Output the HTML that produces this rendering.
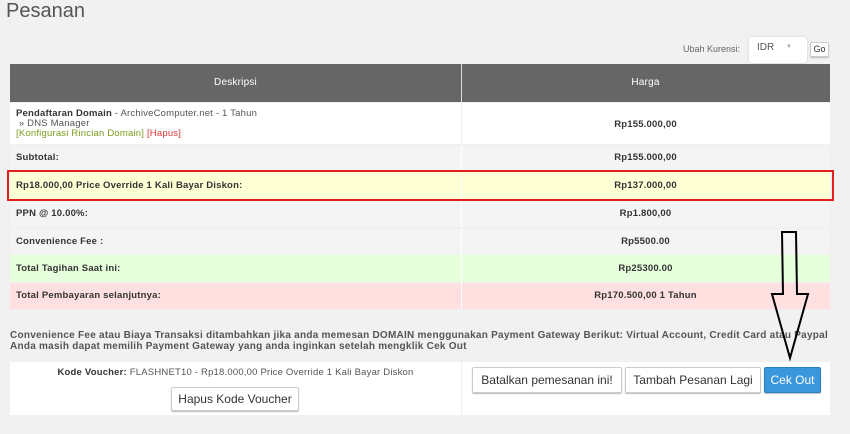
<!DOCTYPE html>
<html><head><style>
body{margin:0;width:850px;height:434px;background:#f1f1f1;font-family:"Liberation Sans",sans-serif;position:relative;overflow:hidden;color:#333}
.a{position:absolute}
.r{position:absolute;left:10px;width:820px;font-size:9.5px;font-weight:bold;color:#333;letter-spacing:0.2px}
.r .l{position:absolute;left:6px}
.r .p{position:absolute;left:461px;width:369px;text-align:center;margin-left:-10px}
.sep{position:absolute;left:451px;top:0;bottom:0;width:1px;background:#fff}
.btn{position:absolute;background:#fff;border:1px solid #ccc;border-radius:2px;font-size:12px;color:#333;text-align:center;box-shadow:0 1px 1px #bbb}
</style></head><body>
<div class="a" style="left:6px;top:0;font-size:20px;color:#555">Pesanan</div>
<div class="a" style="left:683px;top:44px;font-size:9px;color:#666">Ubah Kurensi:</div>
<div class="a" style="left:749px;top:37px;width:58px;height:26px;background:#fff;border-radius:3px;box-shadow:0 0 2px #ccc;font-size:10px;color:#555"><span style="position:absolute;left:8px;top:5px">IDR</span><span style="position:absolute;left:37px;top:7px;font-size:6px;color:#aaa">▼</span></div>
<div class="btn" style="left:810px;top:42px;width:17px;height:13px;font-size:9px;line-height:13px">Go</div>
<div class="r" style="top:64px;height:38px;background:#666;color:#fff;font-weight:normal;font-size:10px;line-height:38px"><div class="sep" style="background:#ddd"></div><span style="position:absolute;left:0;width:451px;text-align:center">Deskripsi</span><span class="p">Harga</span></div>
<div class="r" style="top:103px;height:41px;background:#fff;font-weight:normal;line-height:10px"><div class="sep" style="background:#eee"></div><div class="l" style="top:6px;color:#555"><b style="color:#333">Pendaftaran Domain</b> - ArchiveComputer.net - 1 Tahun<br>&nbsp;» DNS Manager<br><span style="color:#7a9a1a">[Konfigurasi Rincian Domain]</span> <span style="color:#d33">[Hapus]</span></div><span class="p" style="top:17px;font-weight:bold">Rp155.000,00</span></div>
<div class="r" style="top:146px;height:24px;background:#f4f4f4;line-height:24px"><div class="sep"></div><span class="l">Subtotal:</span><span class="p">Rp155.000,00</span></div>
<div class="r" style="top:172px;height:27px;background:#ffffd6;line-height:27px"><div class="sep"></div><span class="l">Rp18.000,00 Price Override 1 Kali Bayar Diskon:</span><span class="p">Rp137.000,00</span></div>
<div class="a" style="left:7px;top:170px;width:823px;height:27px;border:2px solid #e02020"></div>
<div class="r" style="top:201px;height:26px;background:#f4f4f4;line-height:26px"><div class="sep"></div><span class="l">PPN @ 10.00%:</span><span class="p">Rp1.800,00</span></div>
<div class="r" style="top:229px;height:25px;background:#f4f4f4;line-height:25px"><div class="sep"></div><span class="l">Convenience Fee :</span><span class="p">Rp5500.00</span></div>
<div class="r" style="top:255px;height:27px;background:#e6ffdc;line-height:27px"><div class="sep"></div><span class="l">Total Tagihan Saat ini:</span><span class="p">Rp25300.00</span></div>
<div class="r" style="top:283px;height:26px;background:#ffe0e0;line-height:26px"><div class="sep"></div><span class="l">Total Pembayaran selanjutnya:</span><span class="p">Rp170.500,00 1 Tahun</span></div>
<div class="a" style="left:10px;top:330px;font-size:10px;font-weight:bold;color:#555;line-height:11px;white-space:nowrap;letter-spacing:0.25px">Convenience Fee atau Biaya Transaksi ditambahkan jika anda memesan DOMAIN menggunakan Payment Gateway Berikut: Virtual Account, Credit Card atau Paypal<br>Anda masih dapat memilih Payment Gateway yang anda inginkan setelah mengklik Cek Out</div>
<div class="r" style="top:362px;height:53px;background:#fff;font-weight:normal"><div class="sep" style="background:#eee"></div><div style="position:absolute;left:0;width:451px;top:5px;text-align:center;color:#555"><b style="color:#333">Kode Voucher:</b> FLASHNET10 - Rp18.000,00 Price Override 1 Kali Bayar Diskon</div></div>
<div class="btn" style="left:171px;top:387px;width:126px;height:22px;line-height:22px">Hapus Kode Voucher</div>
<div class="btn" style="left:472px;top:367px;width:148px;height:24px;line-height:24px">Batalkan pemesanan ini!</div>
<div class="btn" style="left:625px;top:367px;width:134px;height:24px;line-height:24px">Tambah Pesanan Lagi</div>
<div class="btn" style="left:764px;top:367px;width:55px;height:24px;line-height:24px;background:#3a97dc;border-color:#2a80c0;color:#fff">Cek Out</div>
<svg class="a" style="left:0;top:0" width="850" height="434"><path d="M782 232 L796 232 L797 294 L808 294 L790 358 L772 294 L783 294 Z" fill="none" stroke="#000" stroke-width="2"/></svg>
</body></html>
